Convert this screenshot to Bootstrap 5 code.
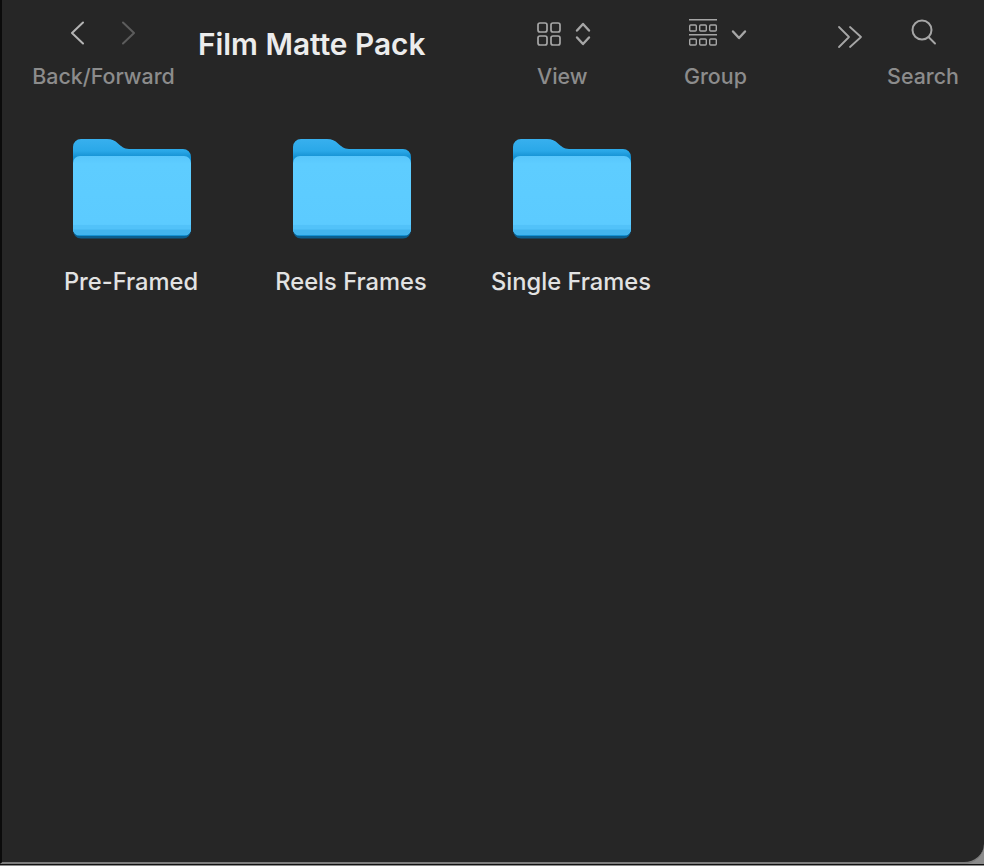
<!DOCTYPE html>
<html lang="en">
<head>
<meta charset="utf-8">
<title>Film Matte Pack</title>
<link rel="stylesheet" href="https://cdn.jsdelivr.net/npm/bootstrap@5.3.0/dist/css/bootstrap.min.css">
<style>
html,body{height:100%;margin:0;background:#8c8c8c;overflow:hidden}
body{font-family:Inter,"Liberation Sans",sans-serif}
.win-frame{width:984px;height:865px;background:#8c8c8c;border-bottom:1px solid #111}
.finder-win{width:984px;height:864px;background:#262626;border-left:2px solid #0b0b0b;border-bottom:2px solid #7d7d7d;border-bottom-right-radius:20px;overflow:hidden}
.bar{height:99px}
.tool-group{width:143px;margin-left:30px}
.tool-label{font-size:21.4px;font-weight:500;line-height:24px;color:#8c8c8c;white-space:nowrap;margin-top:8px}
.tool-icons{height:56px}
.pad-nav{padding-top:21px;gap:38px}
.pad-nav svg:first-child{margin-left:-1px}
.pad-view{padding-top:22px;gap:14px}
.pad-group{padding-top:19px;gap:14px}
.pad-search{padding-top:19px}
.win-title{font-size:29.8px;font-weight:600;color:#ececec;line-height:34px;margin-left:23px;margin-top:27px;width:300px;white-space:nowrap}
.tool-view{width:60px;margin-left:39px}
.tool-group2{width:70px;margin-left:92px}
.tool-group2 .tool-label{margin-left:-5px}
.tool-more{width:30px;margin-left:78px;padding-top:23px}
.tool-search{width:80px;margin-left:16px}
.pad-search svg{margin-left:2px}
.file-grid{padding:39px 0 0 20px}
.file-item{width:220px}
.file-name{font-size:23.7px;font-weight:500;line-height:28px;color:#e2e2e2;margin-top:28px;margin-right:2px}
.folder-ico{display:block}
</style>
</head>
<body>
<div class="win-frame">
<div class="finder-win d-flex flex-column">
  <div class="bar d-flex align-items-start">
    <div class="tool-group text-center">
      <div class="tool-icons pad-nav d-flex justify-content-center">
        <svg width="14" height="24" viewBox="0 0 14 24" fill="none" stroke="#b4b4b4" stroke-width="2" stroke-linecap="round" stroke-linejoin="round"><path d="M13 1.500 2 12l11 10.500"/></svg>
        <svg width="14" height="24" viewBox="0 0 14 24" fill="none" stroke="#5c5c5c" stroke-width="2" stroke-linecap="round" stroke-linejoin="round"><path d="M1 1.500 12 12 1 22.500"/></svg>
      </div>
      <div class="tool-label">Back/Forward</div>
    </div>
    <div class="win-title">Film Matte Pack</div>
    <div class="tool-view">
      <div class="tool-icons pad-view d-flex">
        <svg width="24" height="24" viewBox="0 0 24 24" fill="none" stroke="#a6a6a6" stroke-width="1.700"><rect x="1" y="1" width="9" height="9" rx="2"/><rect x="14" y="1" width="9" height="9" rx="2"/><rect x="1" y="14" width="9" height="9" rx="2"/><rect x="14" y="14" width="9" height="9" rx="2"/></svg>
        <svg width="16" height="24" viewBox="0 0 16 24" fill="none" stroke="#a6a6a6" stroke-width="2.400" stroke-linecap="round" stroke-linejoin="round"><path d="M2 8.500 8 2l6 6.500M2 15.500 8 22l6-6.500"/></svg>
      </div>
      <div class="tool-label">View</div>
    </div>
    <div class="tool-group2">
      <div class="tool-icons pad-group d-flex">
        <svg width="28" height="27" viewBox="0 0 28 27" fill="none" stroke="#a6a6a6" stroke-width="1.400"><path d="M0 .7h28M0 15.700h28"/><rect x=".7" y="6" width="6.600" height="6" rx="1"/><rect x="10.700" y="6" width="6.600" height="6" rx="1"/><rect x="20.700" y="6" width="6.600" height="6" rx="1"/><rect x=".7" y="20" width="6.600" height="6" rx="1"/><rect x="10.700" y="20" width="6.600" height="6" rx="1"/><rect x="20.700" y="20" width="6.600" height="6" rx="1"/></svg>
        <svg width="16" height="27" viewBox="0 0 16 27" fill="none" stroke="#a6a6a6" stroke-width="2.400" stroke-linecap="round" stroke-linejoin="round"><path d="m2 12.500 6 6.500 6-6.500"/></svg>
      </div>
      <div class="tool-label">Group</div>
    </div>
    <div class="tool-more">
      <svg width="26" height="24" viewBox="0 0 26 24" fill="none" stroke="#a6a6a6" stroke-width="1.800" stroke-linecap="round" stroke-linejoin="round"><path d="M2 2l10 10L2 22M13 2l11 10-11 10"/></svg>
    </div>
    <div class="tool-search">
      <div class="tool-icons pad-search d-flex justify-content-center">
        <svg width="26" height="26" viewBox="0 0 26 26" fill="none" stroke="#a6a6a6" stroke-width="2" stroke-linecap="round"><circle cx="11" cy="11" r="9.500"/><path d="m17.500 18 6.500 6.500"/></svg>
      </div>
      <div class="tool-label text-center">Search</div>
    </div>
  </div>
  <div class="file-grid d-flex">
    <div class="file-item d-flex flex-column align-items-center">
      <svg class="folder-ico" width="120" height="102" viewBox="0 0 120 102"><use href="#fld"/></svg>
      <div class="file-name">Pre-Framed</div>
    </div>
    <div class="file-item d-flex flex-column align-items-center">
      <svg class="folder-ico" width="120" height="102" viewBox="0 0 120 102"><use href="#fld"/></svg>
      <div class="file-name">Reels Frames</div>
    </div>
    <div class="file-item d-flex flex-column align-items-center">
      <svg class="folder-ico" width="120" height="102" viewBox="0 0 120 102"><use href="#fld"/></svg>
      <div class="file-name">Single Frames</div>
    </div>
  </div>
</div>
</div>
<svg width="0" height="0" class="d-block">
  <defs>
    <linearGradient id="bk" x1="0" y1="0" x2="0" y2="1"><stop offset="0" stop-color="#38b0ee"/><stop offset=".12" stop-color="#2aa8e8"/><stop offset=".18" stop-color="#1592d4"/><stop offset="1" stop-color="#1592d4"/></linearGradient>
    <linearGradient id="fr" x1="0" y1="0" x2="0" y2="1"><stop offset="0" stop-color="#58c6fb"/><stop offset=".1" stop-color="#5ecdff"/><stop offset=".85" stop-color="#5ccbff"/><stop offset="1" stop-color="#54c2f8"/></linearGradient>
    <g id="fld">
      <path d="M1 9a8 8 0 0 1 8-8h26c5 0 8 1.500 11 4.500 3 2.500 6 5.500 11 5.500h54a8 8 0 0 1 8 8v72a9 9 0 0 1-9 9H10a9 9 0 0 1-9-9z" fill="url(#bk)"/>
      <path d="M1 92a8 8 0 0 0 8 8.500h102a8 8 0 0 0 8-8.500V93a7 7 0 0 1-7 5H8a7 7 0 0 1-7-5z" fill="#0a5f90"/>
      <path d="M1 25a7 7 0 0 1 7-7h104a7 7 0 0 1 7 7v66a6 6 0 0 1-6 6H7a6 6 0 0 1-6-6z" fill="url(#fr)"/>
      <path d="M1 87h118v4a6 6 0 0 1-6 6H7a6 6 0 0 1-6-6z" fill="#52c2f9"/>
      <path d="M1 91.500h118a6 6 0 0 1-6 5.500H7a6 6 0 0 1-6-5.500z" fill="#42b4ee"/>
    </g>
  </defs>
</svg>
<script src="https://cdn.jsdelivr.net/npm/bootstrap@5.3.0/dist/js/bootstrap.bundle.min.js"></script>
</body>
</html>
